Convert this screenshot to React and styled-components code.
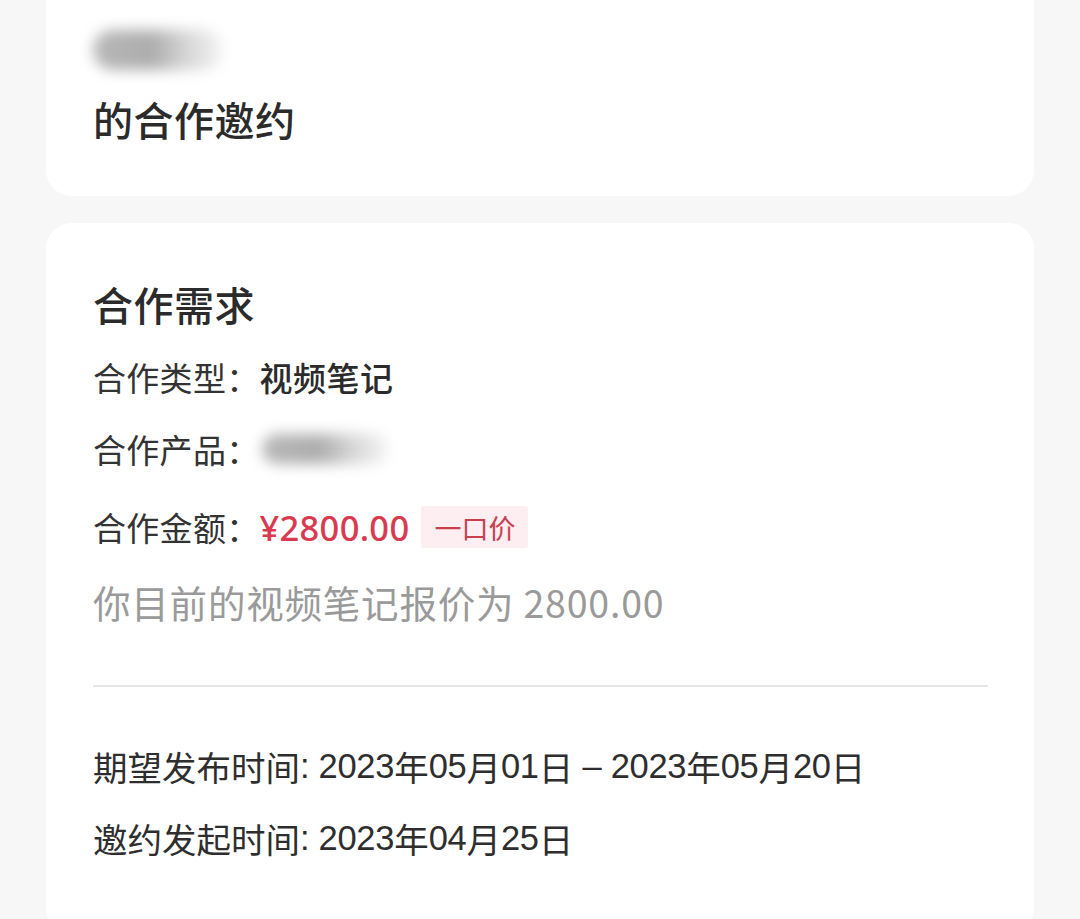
import React from 'react';
import styled, { createGlobalStyle } from 'styled-components';

const GlobalStyle = createGlobalStyle`
  html, body {
    margin: 0;
    padding: 0;
    background: #f7f7f7;
  }
  body {
    font-family: "Noto Sans CJK SC", "Noto Sans", sans-serif;
    color: #2e2e2e;
  }
`;

const Page = styled.div`
  width: 1080px;
  height: 919px;
  overflow: hidden;
  padding: 0 46px;
  box-sizing: border-box;
  display: flex;
  flex-direction: column;
  gap: 27px;
`;

const Card = styled.section`
  background: #fff;
  border-radius: 26px;
  padding: ${(p) => p.$pad};
  margin-top: ${(p) => p.$offset || '0'};
  display: flex;
  flex-direction: column;
`;

const Blur = styled.div`
  width: ${(p) => p.$w}px;
  height: ${(p) => p.$h}px;
  border-radius: ${(p) => p.$h / 2}px;
  background: linear-gradient(90deg, #b8b8b8 0%, #adadad 45%, #d6d6d6 72%, #f4f4f4 100%);
  filter: blur(7px);
`;

const Heading = styled.h2`
  margin: ${(p) => p.$mt || 0}px 0 0;
  font-size: 40px;
  font-weight: 500;
  line-height: ${(p) => p.$lh}px;
  color: #2b2b2b;
  letter-spacing: 0.5px;
`;

const Row = styled.div`
  display: flex;
  align-items: center;
  height: ${(p) => p.$h || 72}px;
  font-size: 33px;
  color: #333;
`;

const Label = styled.span`
  color: #333;
  letter-spacing: 0.3px;
`;

const Value = styled.span`
  font-weight: 500;
  color: #2b2b2b;
  letter-spacing: 0.5px;
`;

const Price = styled.span`
  color: #d83b4f;
  font-weight: 500;
  font-family: "Noto Sans", "Noto Sans CJK SC", sans-serif;
  font-size: 34.5px;
  letter-spacing: 0.3px;
`;

const Tag = styled.span`
  margin-left: 12px;
  display: inline-flex;
  align-items: center;
  height: 42px;
  padding: 0 13px;
  background: #fdeef1;
  color: #c9404f;
  font-size: 27px;
  border-radius: 3px;
`;

const Hint = styled.div`
  display: flex;
  align-items: center;
  height: 64px;
  font-size: 37.5px;
  color: #9a9a9a;
  letter-spacing: 0.8px;
`;

const Divider = styled.hr`
  border: none;
  height: 2px;
  background: #e6e6e6;
  margin: 52px 0 43px;
`;

const DateRow = styled.div`
  display: flex;
  align-items: center;
  height: 72px;
  font-size: 34.5px;
  color: #2e2e2e;
  white-space: pre;
`;

const DateNum = styled.span`
  font-family: "Liberation Sans", "Noto Sans CJK SC", sans-serif;
  letter-spacing: -0.3px;
`;

const ProductBlur = styled.div`
  margin-left: 2px;
  display: flex;
  align-items: center;
`;

export default function App() {
  return (
    <>
      <GlobalStyle />
      <Page>
        <Card $pad="54px 47px 49px" $offset="-24px">
          <Blur $w={130} $h={40} />
          <Heading $lh={56} $mt={21}>的合作邀约</Heading>
        </Card>
        <Card $pad="44px 46px 60px 47px">
          <Heading $lh={74}>合作需求</Heading>
          <Row>
            <Label>合作类型：</Label>
            <Value>视频笔记</Value>
          </Row>
          <Row>
            <Label>合作产品：</Label>
            <ProductBlur>
              <Blur $w={126} $h={30} />
            </ProductBlur>
          </Row>
          <Row $h={84}>
            <Label>合作金额：</Label>
            <Price>¥2800.00</Price>
            <Tag>一口价</Tag>
          </Row>
          <Hint>你目前的视频笔记报价为 2800.00</Hint>
          <Divider />
          <DateRow>
            期望发布时间<DateNum>: 2023</DateNum>年<DateNum>05</DateNum>月<DateNum>01</DateNum>日<DateNum> – 2023</DateNum>年<DateNum>05</DateNum>月<DateNum>20</DateNum>日
          </DateRow>
          <DateRow>
            邀约发起时间<DateNum>: 2023</DateNum>年<DateNum>04</DateNum>月<DateNum>25</DateNum>日
          </DateRow>
        </Card>
      </Page>
    </>
  );
}
